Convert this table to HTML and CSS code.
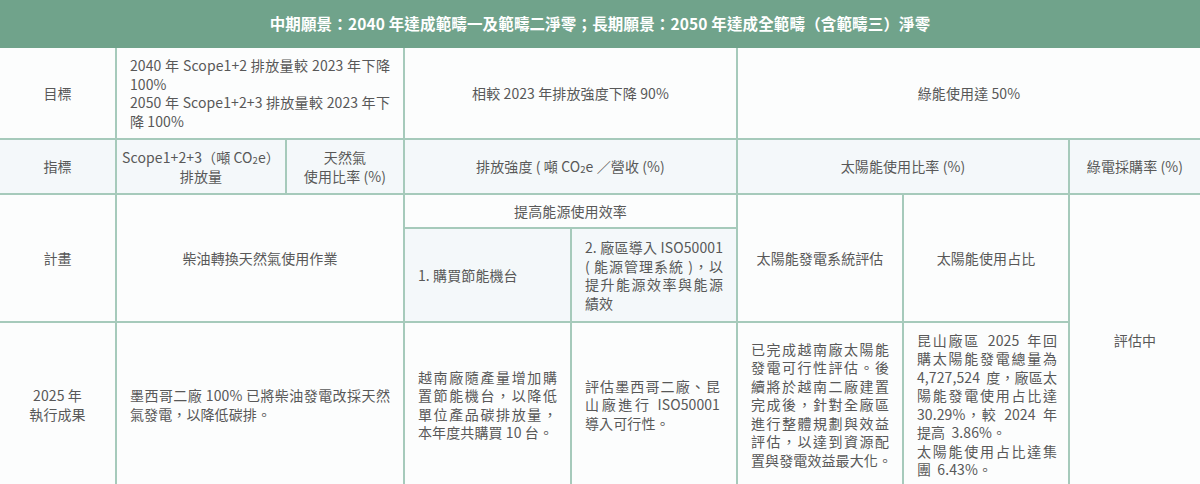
FILE: index.html
```html
<!DOCTYPE html>
<html lang="zh-Hant">
<head>
<meta charset="utf-8">
<title>淨零目標</title>
<link rel="stylesheet" href="styles.css">
</head>
<body>
<table class="goals">
  <colgroup>
    <col class="w116"><col class="w170"><col class="w118"><col class="w167"><col class="w166"><col class="w166"><col class="w166"><col class="w131">
  </colgroup>
  <tr class="r-head">
    <th class="head" colspan="8">中期願景：2040 年達成範疇一及範疇二淨零；長期願景：2050 年達成全範疇（含範疇三）淨零</th>
  </tr>
  <tr class="r-goal">
    <td class="lab">目標</td>
    <td class="txt" colspan="2">
      <div>2040 年 Scope1+2 排放量較 2023 年下降 100%</div>
      <div>2050 年 Scope1+2+3 排放量較 2023 年下降 100%</div>
    </td>
    <td class="ctr" colspan="2">相較 2023 年排放強度下降 90%</td>
    <td class="ctr" colspan="3">綠能使用達 50%</td>
  </tr>
  <tr class="r-ind tint">
    <td class="lab">指標</td>
    <td class="ctr narrow"><span class="nowrap">Scope1+2+3（噸 CO<sub>2</sub>e）</span><br>排放量</td>
    <td class="ctr narrow">天然氣<br>使用比率 (%)</td>
    <td class="ctr" colspan="2">排放強度 ( 噸 CO<sub>2</sub>e ／營收 (%)</td>
    <td class="ctr" colspan="2">太陽能使用比率 (%)</td>
    <td class="ctr">綠電採購率 (%)</td>
  </tr>
  <tr class="r-plan-a">
    <td class="lab" rowspan="2">計畫</td>
    <td class="ctr" colspan="2" rowspan="2">柴油轉換天然氣使用作業</td>
    <td class="ctr" colspan="2">提高能源使用效率</td>
    <td class="ctr" rowspan="2">太陽能發電系統評估</td>
    <td class="ctr" rowspan="2">太陽能使用占比</td>
    <td class="ctr" rowspan="3">評估中</td>
  </tr>
  <tr class="r-plan-b">
    <td class="txt tintc">1. 購買節能機台</td>
    <td class="txt tintc">2. 廠區導入 ISO50001 ( 能源管理系統 )，以提升能源效率與能源績效</td>
  </tr>
  <tr class="r-res">
    <td class="lab">2025 年<br>執行成果</td>
    <td class="txt" colspan="2">墨西哥二廠 100% 已將柴油發電改採天然氣發電，以降低碳排。</td>
    <td class="txt">越南廠隨產量增加購置節能機台，以降低單位產品碳排放量，本年度共購買 10 台。</td>
    <td class="txt tight">評估墨西哥二廠、昆山廠進行 ISO50001 導入可行性。</td>
    <td class="txt">已完成越南廠太陽能發電可行性評估。後續將於越南二廠建置完成後，針對全廠區進行整體規劃與效益評估，以達到資源配置與發電效益最大化<span class="hang">。</span></td>
    <td class="txt spaced">昆山廠區 2025 年回購太陽能發電總量為 4,727,524 度，廠區太陽能發電使用占比達 30.29%，較 2024 年提高 3.86%。<br>太陽能使用占比達集團 6.43%。</td>
  </tr>
</table>
</body>
</html>
```

FILE: styles.css
```css
html, body {
  margin: 0;
  padding: 0;
  background: #ffffff;
}

body {
  font-family: "Noto Sans CJK TC", "Noto Sans", sans-serif;
  color: #585858;
  font-size: 14px;
  letter-spacing: 0.1px;
  line-height: 18.5px;
}

.goals {
  width: 1200px;
  table-layout: fixed;
  border-collapse: collapse;
  border-style: hidden;
}

.w116 { width: 116px; }
.w170 { width: 170px; }
.w118 { width: 118px; }
.w167 { width: 167px; }
.w166 { width: 166px; }
.w131 { width: 131px; }

.goals td,
.goals th {
  border: 2px solid #a6cabb;
  padding: 0 13px;
  vertical-align: middle;
  background: #fcfdfd;
}

.goals th.head {
  background: #70a38b;
  color: #ffffff;
  font-weight: 700;
  font-size: 15.5px;
  letter-spacing: 0.15px;
  text-align: center;
  border-color: #70a38b;
}

.r-head { height: 47px; }
.r-goal { height: 92px; }
.r-ind { height: 55px; }
.r-plan-a { height: 34px; }
.r-plan-b { height: 94px; }
.r-res { height: 164px; }

.lab,
.ctr {
  text-align: center;
}

.txt {
  text-align: justify;
}

.goals td.narrow {
  padding: 0 2px;
}

.goals td.tight {
  padding: 0 16px 0 13px;
}

.goals td.spaced {
  word-spacing: 3px;
  padding: 0 11px 0 13px;
}

.nowrap {
  white-space: nowrap;
}

.hang {
  letter-spacing: -7px;
}

.goals .tint td,
.goals td.tintc {
  background: #f4f8fa;
}

sub {
  font-size: 9.5px;
  line-height: 0;
  vertical-align: baseline;
  position: relative;
  top: 1px;
}
```
